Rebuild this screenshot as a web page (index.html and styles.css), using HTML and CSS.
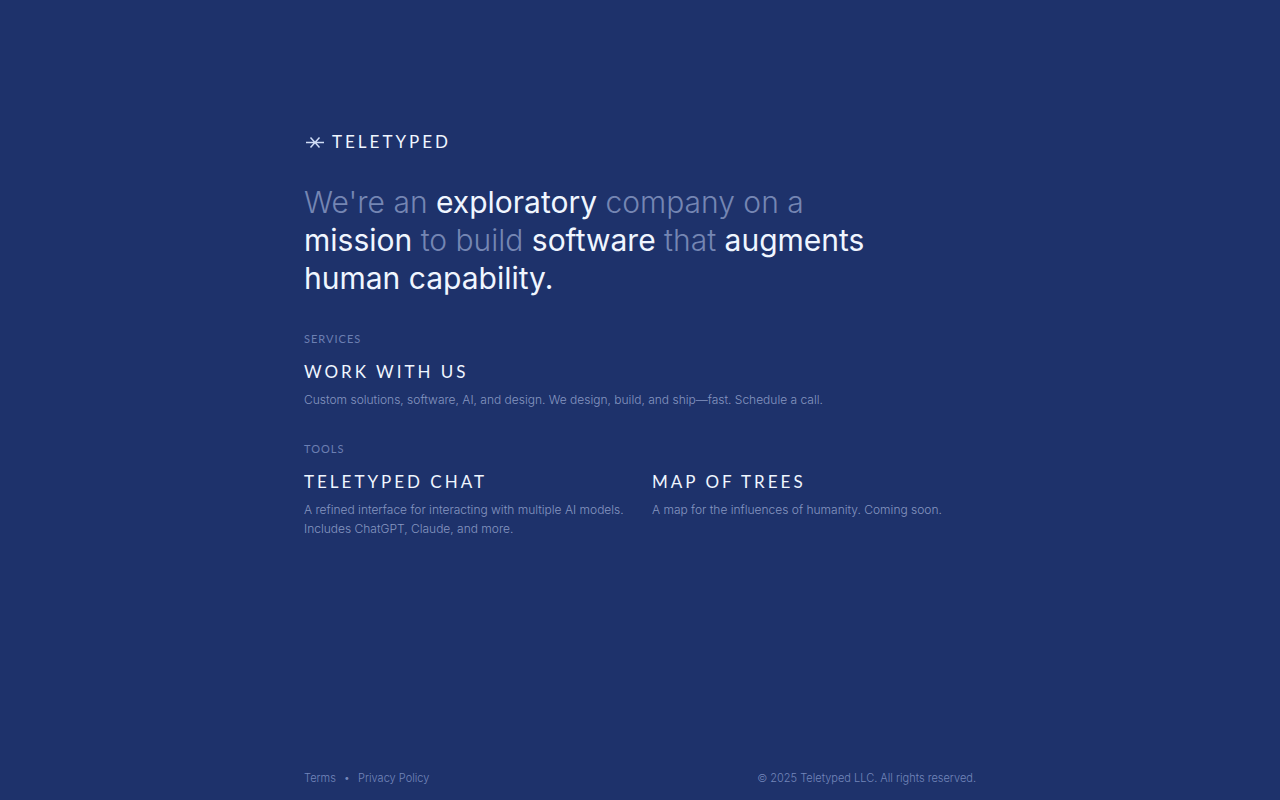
FILE: index.html
```
<!DOCTYPE html>
<html lang="en">
<head>
    <meta charset="UTF-8">
    <meta name="viewport" content="width=device-width, initial-scale=1.0">
    <title>Teletyped</title>
    <link rel="stylesheet" href="styles.css">
</head>
<body>
    <main class="container">
        <header class="brand">
            <svg class="brand-mark" viewBox="0 0 21 13" aria-hidden="true">
                <path d="M2 6.5H20M6.5 1.5L15.5 11.5M15.5 1.5L6.5 11.5"/>
            </svg>
            <span>TELETYPED</span>
        </header>

        <h1 class="mission">We're an <strong>exploratory</strong> company on a <strong>mission</strong> to build <strong>software</strong> that <strong>augments human capability.</strong></h1>

        <section class="section">
            <h2>SERVICES</h2>
            <a class="item" href="#">
                <h3>WORK WITH US</h3>
                <p>Custom solutions, software, AI, and design. We design, build, and ship—fast. Schedule a call.</p>
            </a>
        </section>

        <section class="section">
            <h2>TOOLS</h2>
            <div class="grid">
                <a class="item" href="#">
                    <h3>TELETYPED CHAT</h3>
                    <p>A refined interface for interacting with multiple AI models. Includes ChatGPT, Claude, and more.</p>
                </a>
                <a class="item" href="#">
                    <h3>MAP OF TREES</h3>
                    <p>A map for the influences of humanity. Coming soon.</p>
                </a>
            </div>
        </section>
    </main>

    <footer class="footer">
        <nav class="footer-links">
            <a href="#">Terms</a>
            <span>•</span>
            <a href="#">Privacy Policy</a>
        </nav>
        <p>© 2025 Teletyped LLC. All rights reserved.</p>
    </footer>
</body>
</html>
```

FILE: styles.css
```
* {
    box-sizing: border-box;
    margin: 0;
    padding: 0;
}

body {
    display: flex;
    flex-direction: column;
    align-items: center;
    min-height: 100vh;
    padding: 0 24px;
    background-color: #1e326b;
    color: #f0f6ff;
    font-family: Inter, sans-serif;
    font-weight: 300;
}

a {
    color: inherit;
    text-decoration: none;
}

.container {
    flex: 1;
    width: 100%;
    max-width: 672px;
    padding: 128px 0 48px;
}

.brand {
    display: flex;
    align-items: center;
    gap: 7px;
    font-family: Lato, sans-serif;
    font-size: 17px;
    line-height: 28px;
    font-weight: 400;
    letter-spacing: 3px;
}

.brand-mark {
    width: 21px;
    height: 13px;
    fill: none;
    stroke: #cfdcf5;
    stroke-width: 1.5;
}

.mission {
    max-width: 576px;
    margin-top: 27px;
    margin-bottom: 34px;
    font-size: 30px;
    line-height: 38px;
    font-weight: 300;
    color: #7586b3;
}

.mission strong {
    font-weight: 400;
    color: #f0f6ff;
}

.section {
    margin-top: 32px;
}

.section h2 {
    font-family: Lato, sans-serif;
    font-size: 11px;
    line-height: 16px;
    font-weight: 400;
    letter-spacing: 1px;
    color: #6c7fb2;
}

.item {
    display: block;
    margin-top: 11px;
}

.item h3 {
    font-family: Lato, sans-serif;
    font-size: 17px;
    line-height: 28px;
    font-weight: 400;
    letter-spacing: 3px;
}

.item p {
    margin-top: 4px;
    font-size: 12px;
    line-height: 19px;
    color: #8696c0;
}

.grid {
    display: grid;
    grid-template-columns: 1fr 1fr;
    gap: 24px;
}

.footer {
    display: flex;
    justify-content: space-between;
    width: 100%;
    max-width: 672px;
    padding-bottom: 14px;
    font-size: 11px;
    line-height: 16px;
    color: #7386ba;
}

.footer-links {
    display: flex;
    gap: 8px;
}

@media (max-width: 600px) {
    .container {
        padding-top: 64px;
    }

    .grid {
        grid-template-columns: 1fr;
    }
}
```
